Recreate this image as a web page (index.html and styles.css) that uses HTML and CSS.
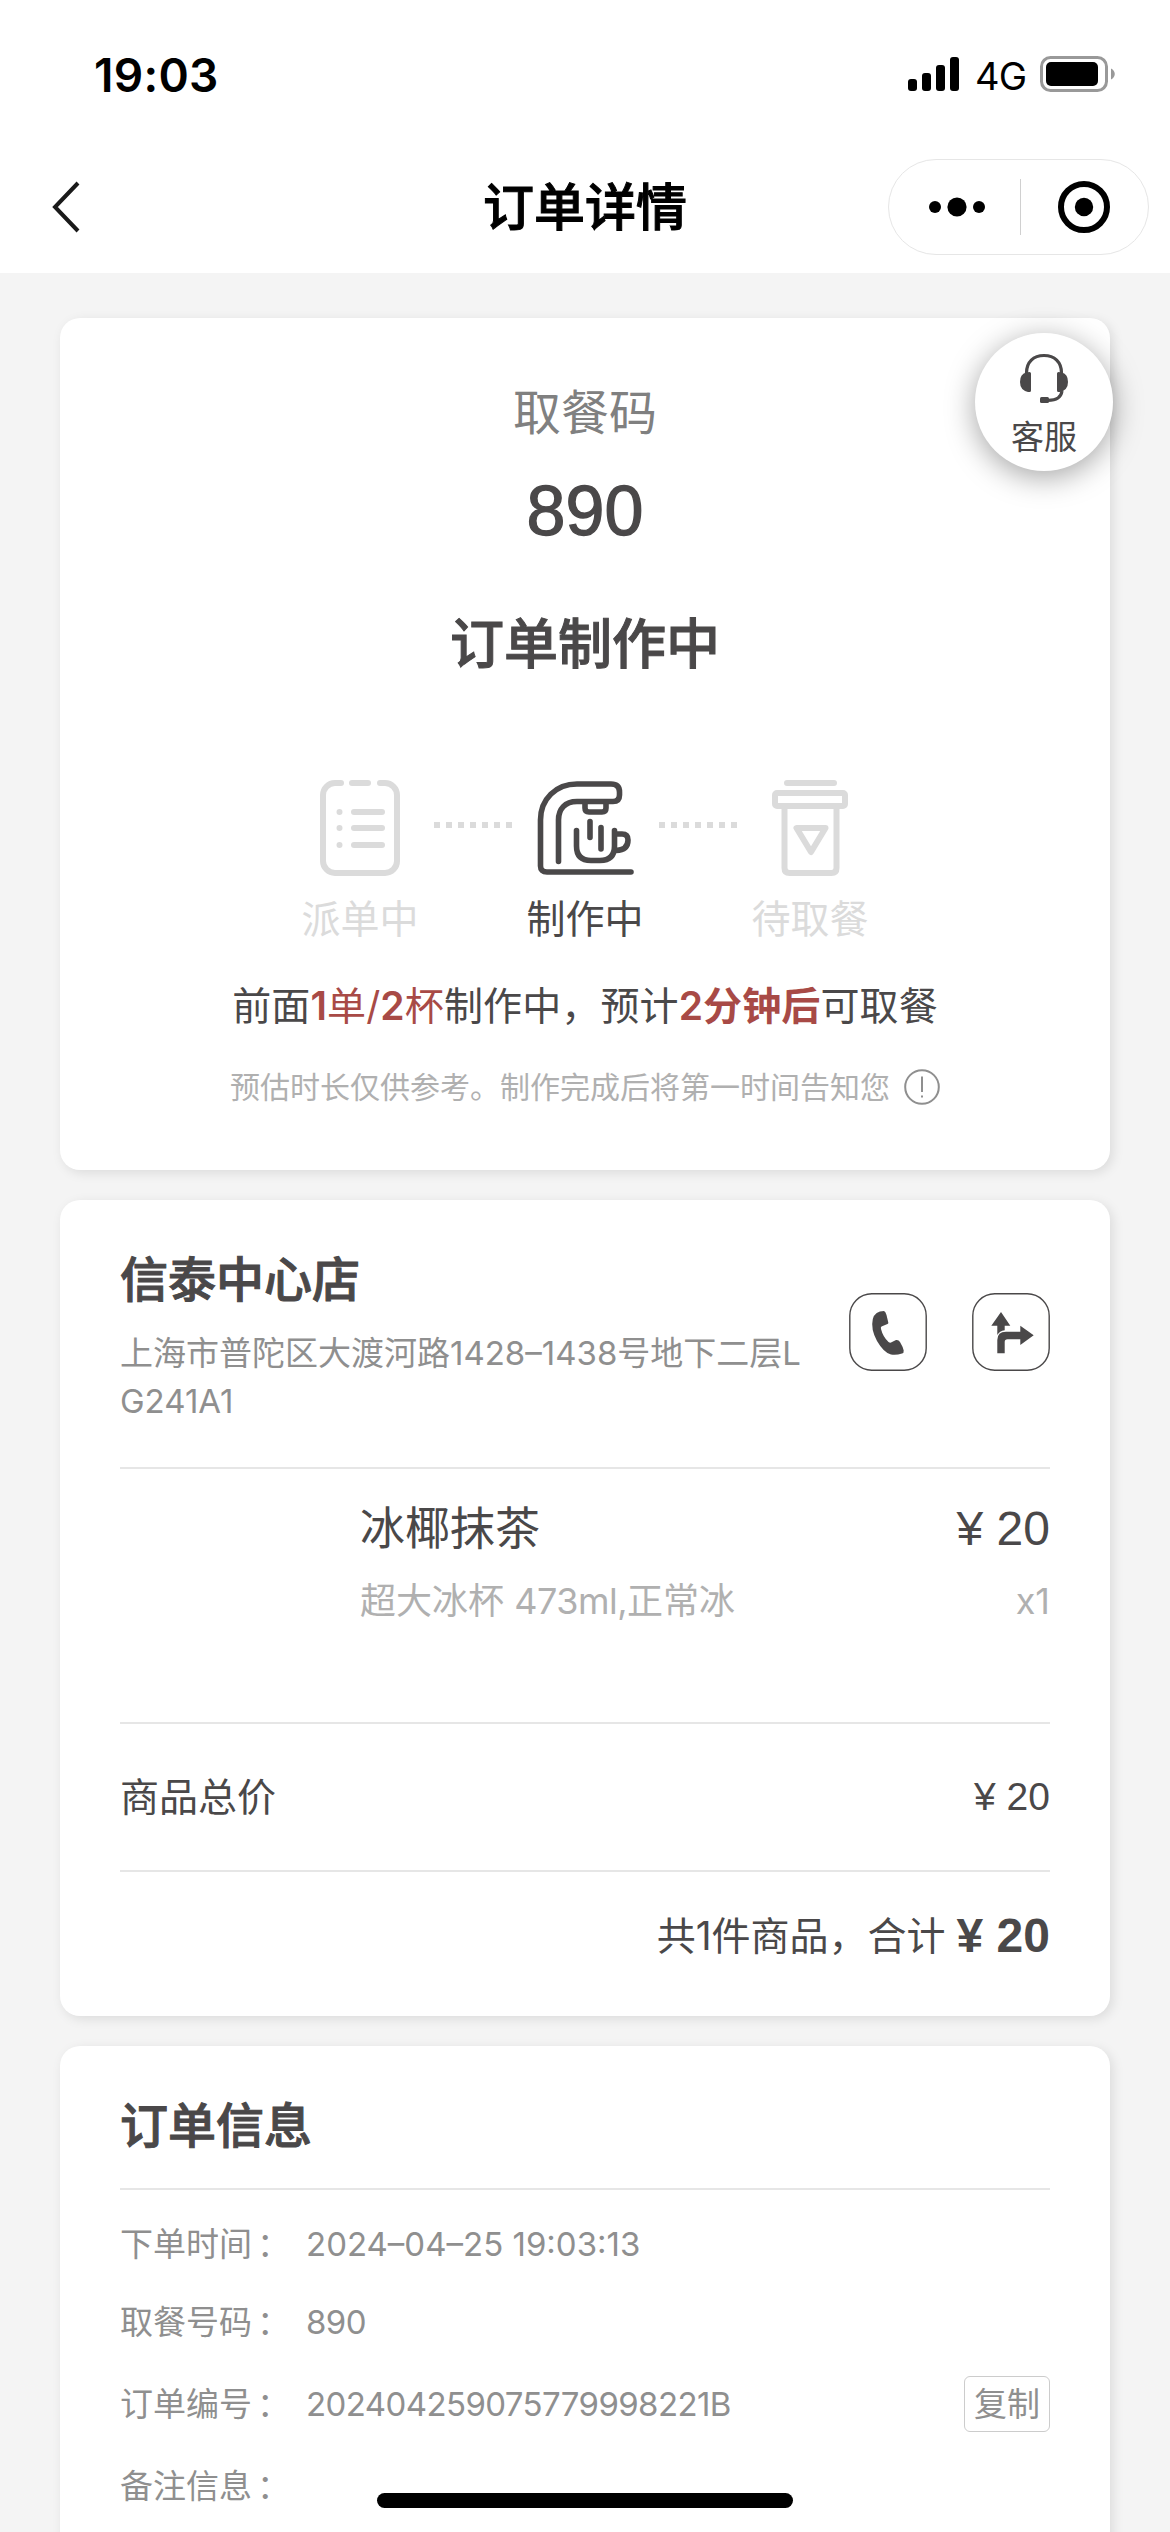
FILE: index.html
```html
<!DOCTYPE html>
<html lang="zh-CN">
<head>
<meta charset="utf-8">
<title>订单详情</title>
<link rel="stylesheet" href="styles.css">
</head>
<body>
<div class="screen">
  <header class="header">
    <div class="status-bar">
      <span class="time">19:03</span>
      <div class="status-icons">
        <svg class="signal" width="52" height="34" viewBox="0 0 52 34">
          <rect x="0" y="22" width="9" height="12" rx="3"/><rect x="14" y="16" width="9" height="18" rx="3"/>
          <rect x="28" y="8" width="9" height="26" rx="3"/><rect x="42" y="0" width="9" height="34" rx="3"/>
        </svg>
        <span class="network">4G</span>
        <svg class="battery" width="76" height="36" viewBox="0 0 76 36">
          <rect x="1.5" y="1.5" width="65" height="33" rx="9" fill="none" stroke="#999" stroke-width="3"/>
          <rect x="6" y="6" width="52" height="24" rx="5"/>
          <path d="M71 12.5C76 15 76 21 71 23.5Z" fill="#999"/>
        </svg>
      </div>
    </div>
    <div class="nav-bar">
      <svg class="back" width="30" height="52" viewBox="0 0 30 52"><path d="M27 2L4 26L27 50" fill="none" stroke="#1a1a1a" stroke-width="4"/></svg>
      <h1 class="nav-title">订单详情</h1>
      <div class="capsule">
        <svg width="56" height="20" viewBox="0 0 56 20"><circle cx="6" cy="10" r="6"/><circle cx="28" cy="10" r="9.6"/><circle cx="50" cy="10" r="6"/></svg>
        <span class="capsule-line"></span>
        <svg width="52" height="52" viewBox="0 0 52 52"><circle cx="26" cy="26" r="23" fill="none" stroke="#000" stroke-width="6"/><circle cx="26" cy="26" r="9.2"/></svg>
      </div>
    </div>
  </header>

  <main class="content">
    <section class="card progress">
      <p class="code-label">取餐码</p>
      <p class="code">890</p>
      <h2 class="state">订单制作中</h2>
      <div class="steps">
        <div class="step">
          <svg width="80" height="96" viewBox="0 0 80 96" fill="none" stroke="#dbdbdb" stroke-width="6" stroke-linecap="round">
            <path d="M21 3H15A12 12 0 0 0 3 15V81A12 12 0 0 0 15 93H65A12 12 0 0 0 77 81V15A12 12 0 0 0 65 3H60"/>
            <path d="M32 3H48M34 32H62M34 48H62M34 65H62M19.5 31.9V32.1M19.5 47.9V48.1M19.5 64.9V65.1"/>
          </svg>
          <span>派单中</span>
        </div>
        <i class="dots"></i>
        <div class="step active">
          <svg width="97" height="96" viewBox="0 0 97 96" fill="none" stroke="#4a4849" stroke-width="5.6" stroke-linecap="round" stroke-linejoin="round">
            <path d="M94 92H10Q3.500 92 3.500 86V40C3.500 19 19 4 40 4H74Q82.500 4 82.500 12V15Q82.500 21.500 76 21.500H40C28 21.500 21.500 29 21.500 40V81.500"/>
            <path d="M48 22V28Q48 32 52 32H65Q69 32 69 28V22M53 41.500V57.500M64 47.500V69M39.500 50.500V66Q39.500 80.500 54 80.500H63Q77.500 80.500 77.500 66V50.500M78 54H85Q91 54 91 60Q91 70 79 70.500"/>
          </svg>
          <span>制作中</span>
        </div>
        <i class="dots"></i>
        <div class="step">
          <svg width="76" height="96" viewBox="0 0 76 96" fill="none" stroke="#dbdbdb" stroke-width="6" stroke-linecap="round" stroke-linejoin="round">
            <path d="M15 3H62M12.500 28V88Q12.500 93 17.500 93H59.500Q64.500 93 64.500 88V28M24.500 48H53.500L39 72Z"/>
            <rect x="3" y="13" width="70" height="13" rx="2"/>
          </svg>
          <span>待取餐</span>
        </div>
      </div>
      <p class="queue">前面<em><b>1</b>单/<b>2</b>杯</em>制作中，预计<em><b>2分钟后</b></em>可取餐</p>
      <div class="hint">
        <span>预估时长仅供参考。制作完成后将第一时间告知您</span>
        <svg width="36" height="36" viewBox="0 0 36 36"><circle cx="18" cy="18" r="16.800" fill="none" stroke="#8f8f8f" stroke-width="2"/><path d="M18 7.500V23M18 26.500V28.500" stroke="#8f8f8f" stroke-width="2"/></svg>
      </div>
      <a class="service">
        <svg width="48" height="50" viewBox="0 0 48 50" fill="#4a4849">
          <path d="M6.500 20C6.500 9 13.500 2.500 24 2.500S41.500 9 41.500 20M42 38C41 44.500 37 47.300 28 47.300" fill="none" stroke="#4a4849" stroke-width="3.200"/>
          <path d="M9.500 19Q11 19 11 20.500V37.500Q11 39 9.500 39H8Q0 37 0 29T6 19.500ZM38.500 19Q37 19 37 20.500V37.500Q37 39 38.500 39H40Q48 37 48 29T42 19.500Z"/>
          <rect x="20" y="44" width="9" height="6" rx="1.500"/>
        </svg>
        <span>客服</span>
      </a>
    </section>

    <section class="card order">
      <div class="store">
        <div class="store-text">
          <h2 class="title">信泰中心店</h2>
          <p class="address">上海市普陀区大渡河路1428–1438号地下二层L<br>G241A1</p>
        </div>
        <div class="store-actions">
          <a class="action"><svg width="78" height="78" viewBox="0 0 78 78"><rect class="frame" x="0.8" y="0.8" width="76.400" height="76.400" rx="22"/><path d="M35 18Q36.500 18.500 37.500 22L39.300 29.500Q39.500 30.500 38.500 31L32.500 33.500Q31.500 34 32 36Q34 44 39.500 49Q41 50 42 49.500L47 47Q49.500 46.500 51 49Q54 54 54.700 57.500Q55 60 53 60.500Q47 62.500 42 61.500Q35 60 28 48Q21.500 36 23.800 26Q26 18 35 18Z"/></svg></a>
          <a class="action"><svg width="78" height="78" viewBox="0 0 78 78"><rect class="frame" x="0.8" y="0.8" width="76.400" height="76.400" rx="22"/><path d="M29 19L38.300 32.700H32.700V37.300Q27.500 38 25.300 42V32.700H19.300ZM25.300 60.300V47Q25.300 38.700 34 38.700H48.300V32.700L61.700 42.300L48.300 52V46.300H35.500Q32.700 46.300 32.700 49V60.300Z"/></svg></a>
        </div>
      </div>
      <div class="item">
        <div class="item-row"><span class="item-name">冰椰抹茶</span><span class="price price-lg">¥ 20</span></div>
        <div class="item-row item-spec"><span>超大冰杯 <span class="spec-size">473ml,</span>正常冰</span><span>x1</span></div>
      </div>
      <div class="subtotal"><span>商品总价</span><span class="price">¥ 20</span></div>
      <div class="total"><span>共1件商品，合计</span><b class="price price-lg">¥ 20</b></div>
    </section>

    <section class="card info">
      <h2 class="title info-title">订单信息</h2>
      <dl class="info-list">
        <div class="info-row"><dt>下单时间<span class="colon">：</span></dt><dd class="date">2024–04–25 19:03:13</dd></div>
        <div class="info-row"><dt>取餐号码<span class="colon">：</span></dt><dd>890</dd></div>
        <div class="info-row"><dt>订单编号<span class="colon">：</span></dt><dd>202404259075779998221B</dd><a class="copy">复制</a></div>
        <div class="info-row"><dt>备注信息<span class="colon">：</span></dt><dd></dd></div>
      </dl>
    </section>
  </main>
  <div class="home-indicator"></div>
</div>
</body>
</html>
```
FILE: styles.css
```css
* { box-sizing: border-box; margin: 0; padding: 0; }
svg { display: block; flex: none; }
em { font-style: normal; }

body {
  background: #f4f4f4;
  color: #4a4849;
  font-family: Inter, "Noto Sans CJK SC", sans-serif;
  font-weight: 400;
}

.screen { position: relative; width: 1170px; height: 2532px; overflow: hidden; }

/* Status bar and navigation */
.header { height: 273px; background: #fff; color: #000; }
.status-bar { height: 159px; padding: 44px 54px 0 94px; display: flex; justify-content: space-between; align-items: flex-start; }
.time { font-size: 46px; font-weight: 600; line-height: 62px; letter-spacing: 0.3px; }
.status-icons { display: flex; align-items: center; height: 60px; }
.network { width: 50px; margin: 3px 15px 0 15px; font-size: 38px; line-height: 40px; letter-spacing: -0.7px; }
.nav-bar { height: 96px; padding: 0 21px 0 51px; display: flex; align-items: center; }
.back { margin-right: 402px; }
.nav-title { padding-top: 2px; font-size: 51px; font-weight: 500; line-height: 60px; width: 204px; white-space: nowrap; -webkit-text-stroke: 1px #000; }
.capsule { margin-left: auto; width: 261px; height: 96px; padding: 0 38px 0 40px; border: 1px solid #e6e6e6; border-radius: 48px; display: flex; align-items: center; justify-content: space-between; }
.capsule-line { width: 1px; height: 56px; margin-left: -2px; background: #d0d0d0; }

/* Cards */
.content { padding: 45px 60px 0; display: flex; flex-direction: column; gap: 30px; }
.card { background: #fff; border-radius: 20px; box-shadow: 3px 3px 12px rgba(0, 0, 0, 0.1); }
.title { font-size: 48px; font-weight: 500; line-height: 60px; -webkit-text-stroke: 1px #4a4849; }

/* Progress card */
.progress { position: relative; height: 852px; padding-top: 65px; text-align: center; }
.code-label { font-size: 48px; line-height: 60px; color: #808080; }
.code { margin-top: 28px; font: 70px/80px "Liberation Sans", sans-serif; -webkit-text-stroke: 1.3px #4a4849; }
.state { margin-top: 59px; font-size: 54px; font-weight: 500; line-height: 70px; -webkit-text-stroke: 1px #4a4849; }
.steps { margin-top: 100px; display: flex; justify-content: center; }
.step { width: 147px; display: flex; flex-direction: column; align-items: center; gap: 18px; font-size: 39px; line-height: 50px; color: #dbdbdb; }
.active { color: #4a4849; }
.dots { width: 78px; height: 6px; margin-top: 42px; background: repeating-linear-gradient(90deg, #dbdbdb 0 6px, transparent 6px 12px); }
.queue { margin-top: 37px; font-size: 39px; line-height: 50px; letter-spacing: 0.12px; }
.queue em { color: #a84a46; }
.queue b { font-weight: 600; }
.hint { margin-top: 36px; display: flex; justify-content: center; align-items: center; gap: 14px; font-size: 30px; line-height: 40px; color: #b0b0b0; }
.service { position: absolute; top: 15px; right: -3px; width: 138px; height: 138px; padding-top: 20px; border-radius: 50%; background: #fff; box-shadow: 0 6px 30px rgba(0, 0, 0, 0.36); display: flex; flex-direction: column; align-items: center; gap: 14px; font-size: 33px; line-height: 40px; }

/* Order card */
.order { height: 816px; padding: 0 60px; }
.store { height: 269px; padding-top: 50px; display: flex; justify-content: space-between; border-bottom: 2px solid #e6e6e6; }
.address { margin-top: 19px; font-size: 33px; line-height: 48px; color: #8f8f8f; white-space: nowrap; }
.store-actions { display: flex; gap: 45px; padding-top: 43px; }
.action { width: 78px; height: 78px; fill: #4a4849; }
.frame { fill: none; stroke: #4a4849; stroke-width: 1.4; }
.price { font-family: "Liberation Sans", sans-serif; font-size: 39px; }
.price-lg { font-size: 48px; }
.item { height: 255px; padding: 30px 0 0 240px; border-bottom: 2px solid #e6e6e6; }
.item-row { display: flex; justify-content: space-between; align-items: center; line-height: 60px; }
.item-name { font-size: 45px; }
.item-spec { margin-top: 12px; font-size: 36px; color: #b0b0b0; }
.spec-size { letter-spacing: -0.5px; }
.subtotal { height: 148px; display: flex; justify-content: space-between; align-items: center; font-size: 39px; border-bottom: 2px solid #e6e6e6; line-height: 50px; }
.total { height: 128px; display: flex; justify-content: flex-end; align-items: center; gap: 11px; font-size: 39px; line-height: 50px; }

/* Order information card */
.info { height: 520px; padding: 0 60px; }
.info-title { height: 144px; padding-top: 50px; border-bottom: 2px solid #e6e6e6; }
.info-list { padding-top: 24px; font-size: 33px; color: #8f8f8f; }
.info-row { height: 82px; display: flex; align-items: center; line-height: 60px; }
.info-row:first-child { height: 60px; margin-bottom: 7px; }
.info-row dt { width: 186px; white-space: nowrap; }
.info-row dd { letter-spacing: -0.6px; }
.info-row .date { letter-spacing: 0; }
.colon { margin-left: 5px; }
.copy { margin-left: auto; width: 86px; height: 56px; border: 1px solid #ccc; border-radius: 6px; text-align: center; line-height: 54px; }

.home-indicator { position: absolute; left: 377px; top: 2493px; width: 416px; height: 15px; border-radius: 8px; background: #000; }
```
